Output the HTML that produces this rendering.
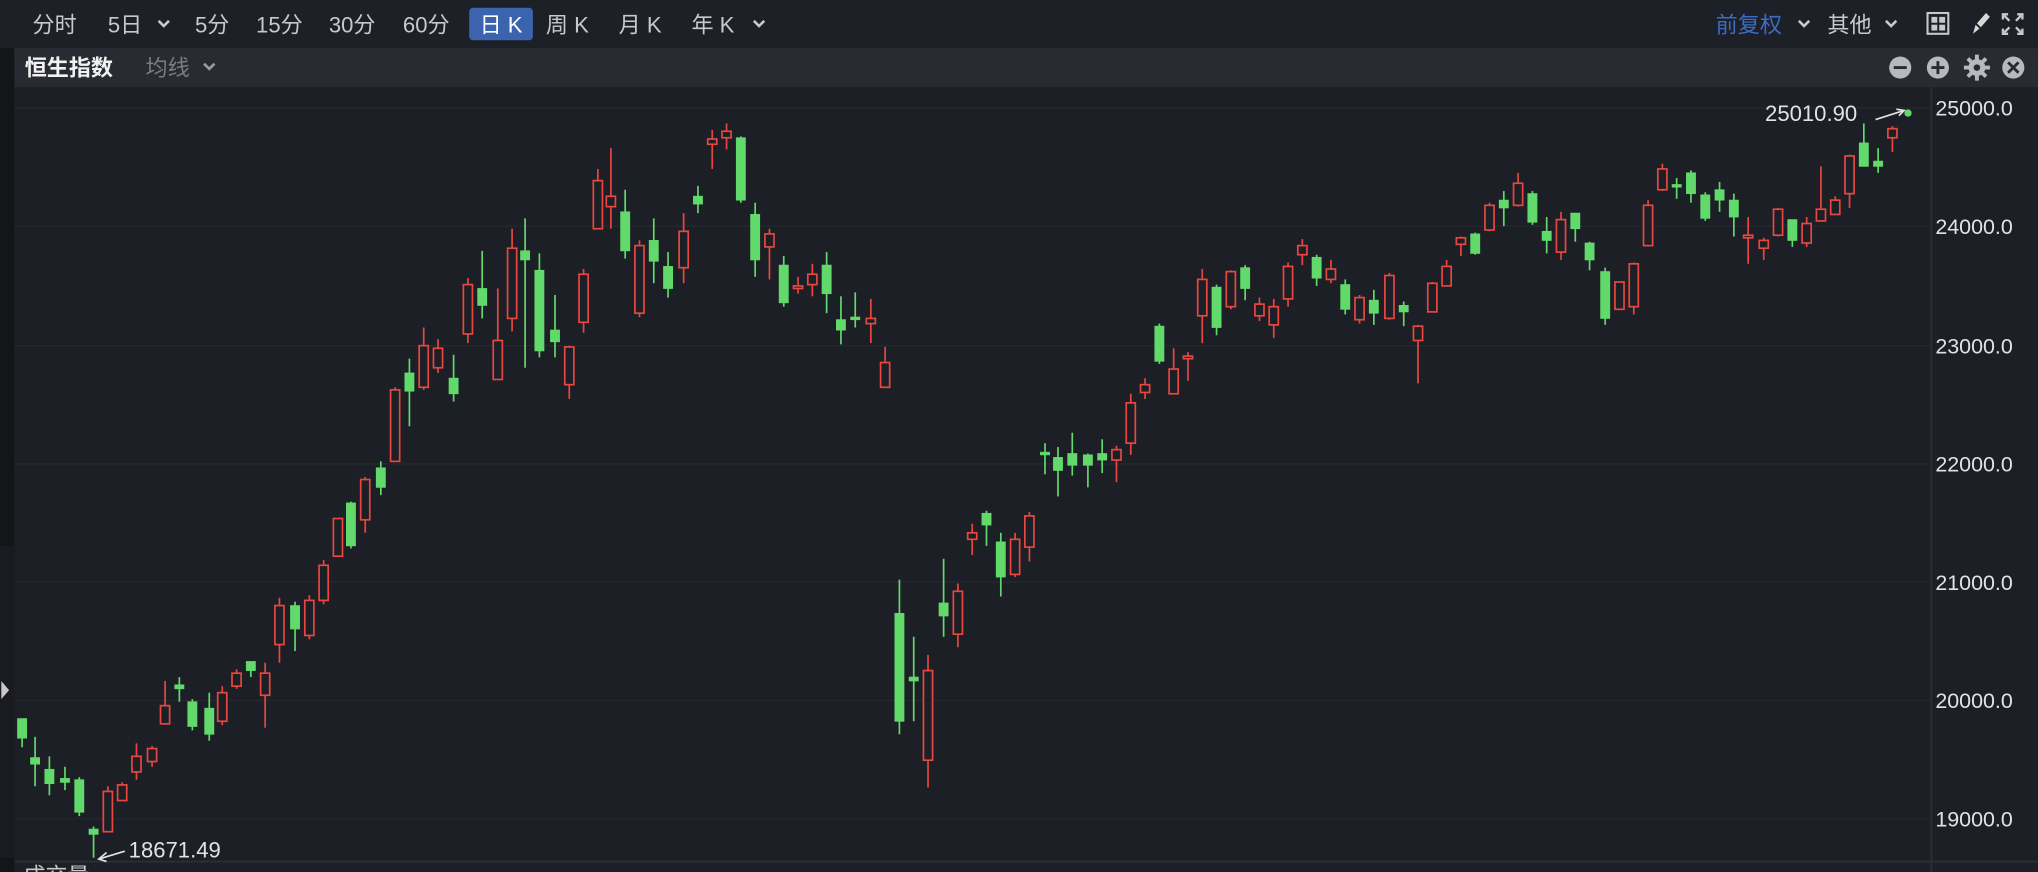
<!DOCTYPE html>
<html><head><meta charset="utf-8"><style>
html,body{margin:0;padding:0;background:#1d1f26;overflow:hidden}
svg{display:block}
text{font-family:"Liberation Sans","Noto Sans CJK SC",sans-serif}
.r line{stroke:#e8473f;stroke-width:1.3}
.r rect{fill:#1d1f26;stroke:#e8473f;stroke-width:1.3}
.g line{stroke:#62d96b;stroke-width:1.3}
.g rect{fill:#62d96b;stroke:#62d96b;stroke-width:0.6}
</style></head><body>
<svg width="2038" height="872" viewBox="0 0 1568 671" preserveAspectRatio="none" xmlns="http://www.w3.org/2000/svg">
<rect width="1568" height="671" fill="#1d1f26"/>
<rect width="1568" height="37" fill="#1e2027"/>
<rect x="11" y="37" width="1557" height="30" fill="#292b32"/>
<rect x="0" y="37" width="11" height="634" fill="#141519"/>
<rect x="0" y="420" width="11" height="240" fill="#1a1b20"/>
<polygon points="1,524 7,531 1,538" fill="#c8c8c8"/>
<!-- grid -->
<g stroke="#262830" stroke-width="1">
<line x1="11" y1="83" x2="1486" y2="83"/><line x1="11" y1="174" x2="1486" y2="174"/>
<line x1="11" y1="266" x2="1486" y2="266"/><line x1="11" y1="357" x2="1486" y2="357"/>
<line x1="11" y1="448" x2="1486" y2="448"/><line x1="11" y1="539" x2="1486" y2="539"/>
<line x1="11" y1="630" x2="1486" y2="630"/>
</g>
<line x1="1486" y1="67" x2="1486" y2="671" stroke="#2c2e36" stroke-width="1.5"/>
<line x1="11" y1="663" x2="1568" y2="663" stroke="#2c2e36" stroke-width="1.5"/>
<!-- axis labels -->
<g fill="#e2e2e2" font-size="16.5">
<text x="1489" y="89">25000.0</text><text x="1489" y="180">24000.0</text>
<text x="1489" y="272">23000.0</text><text x="1489" y="363">22000.0</text>
<text x="1489" y="454">21000.0</text><text x="1489" y="545">20000.0</text>
<text x="1489" y="636">19000.0</text>
</g>
<!-- top bar -->
<rect x="361" y="6" width="49" height="25" rx="3" fill="#3c64ae"/>
<g fill="#c9c9cc" font-size="17">
<text x="25" y="25">分时</text><text x="83" y="25">5日</text><text x="150" y="25">5分</text>
<text x="197" y="25">15分</text><text x="253" y="25">30分</text><text x="310" y="25">60分</text>
<text x="369" y="25" fill="#fff">日 K</text><text x="420" y="25">周 K</text><text x="476" y="25">月 K</text><text x="532" y="25">年 K</text>
<text x="1406" y="25">其他</text>
</g>
<text x="1320" y="25" fill="#3a6cc4" font-size="17">前复权</text>
<g fill="none" stroke="#c9c9cc" stroke-width="2"><path d="M122 16l4 4 4-4"/><path d="M580 16l4 4 4-4"/><path d="M1451 16l4 4 4-4"/><path d="M1384 16l4 4 4-4"/></g>
<!-- right icons -->
<rect x="1483" y="10" width="16" height="16" fill="none" stroke="#c9c9cc" stroke-width="1.6"/>
<g fill="#c9c9cc"><rect x="1486" y="13" width="4.5" height="4.5"/><rect x="1492" y="13" width="4.5" height="4.5"/><rect x="1486" y="19" width="4.5" height="4.5"/><rect x="1492" y="19" width="4.5" height="4.5"/></g>
<path d="M1528 10l3 3-7 8-3-3z M1520 19l3 3-5 4z" fill="#d8d8d8"/>
<g stroke="#c9c9cc" stroke-width="1.8" fill="none"><path d="M1541 15v-4h4M1556 15v-4h-4M1541 22v4h4M1556 22v4h-4"/><path d="M1542 12l4 4M1555 12l-4 4M1542 25l4-4M1555 25l-4-4"/></g>
<!-- second bar -->
<text x="19" y="58" fill="#f2f2f2" font-size="17" font-weight="bold">恒生指数</text>
<text x="112" y="58" fill="#7b7d83" font-size="17">均线</text>
<path d="M157 49l4 4 4-4" fill="none" stroke="#9a9ca0" stroke-width="2"/>
<g fill="#b8b9bc"><circle cx="1462" cy="52" r="8.5"/><circle cx="1491" cy="52" r="8.5"/><circle cx="1549" cy="52" r="8.5"/><circle cx="1521" cy="52" r="6.5"/></g>
<g stroke="#b8b9bc" stroke-width="3"><path d="M1521 42v20M1511 52h20M1514 45l14 14M1528 45l-14 14"/></g>
<circle cx="1521" cy="52" r="2.5" fill="#292b32"/>
<g stroke="#292b32" stroke-width="2.2"><path d="M1457 52h10M1486 52h10M1491 47v10M1545 48l8 8M1553 48l-8 8"/></g>
<!-- annotations -->
<text x="1358" y="93" fill="#e2e2e2" font-size="17">25010.90</text>
<path d="M1443 92l22-7M1459 84l6 1-4 4" stroke="#e2e2e2" stroke-width="1.3" fill="none"/>
<circle cx="1468" cy="87" r="2.8" fill="#62d96b"/>
<text x="99" y="660" fill="#e2e2e2" font-size="17">18671.49</text>
<path d="M96 655l-20 6M82 656l-6 5 6 2" stroke="#e2e2e2" stroke-width="1.3" fill="none"/>
<text x="18" y="680" fill="#c9c9cc" font-size="17">成交量</text>
<!-- candles -->
<g class="g"><line x1="17" y1="553" x2="17" y2="575"/><rect x="13.5" y="553" width="7" height="15"/></g>
<g class="g"><line x1="27" y1="567" x2="27" y2="605"/><rect x="23.5" y="583" width="7" height="5"/></g>
<g class="g"><line x1="38" y1="582" x2="38" y2="612"/><rect x="34.5" y="592" width="7" height="11"/></g>
<g class="g"><line x1="50" y1="590" x2="50" y2="608"/><rect x="46.5" y="599" width="7" height="3"/></g>
<g class="g"><line x1="61" y1="598" x2="61" y2="628"/><rect x="57.5" y="600" width="7" height="25"/></g>
<g class="g"><line x1="72" y1="636" x2="72" y2="660"/><rect x="68.5" y="638" width="7" height="4"/></g>
<g class="r"><line x1="83" y1="605" x2="83" y2="640"/><rect x="79.5" y="609" width="7" height="31"/></g>
<g class="r"><line x1="94" y1="602" x2="94" y2="616"/><rect x="90.5" y="604" width="7" height="12"/></g>
<g class="r"><line x1="105" y1="572" x2="105" y2="600"/><rect x="101.5" y="582" width="7" height="12"/></g>
<g class="r"><line x1="117" y1="574" x2="117" y2="590"/><rect x="113.5" y="576" width="7" height="10"/></g>
<g class="r"><line x1="127" y1="524" x2="127" y2="557"/><rect x="123.5" y="543" width="7" height="14"/></g>
<g class="g"><line x1="138" y1="521" x2="138" y2="540"/><rect x="134.5" y="527" width="7" height="3"/></g>
<g class="g"><line x1="148" y1="538" x2="148" y2="562"/><rect x="144.5" y="540" width="7" height="19"/></g>
<g class="g"><line x1="161" y1="533" x2="161" y2="570"/><rect x="157.5" y="545" width="7" height="20"/></g>
<g class="r"><line x1="171" y1="528" x2="171" y2="558"/><rect x="167.5" y="533" width="7" height="22"/></g>
<g class="r"><line x1="182" y1="515" x2="182" y2="530"/><rect x="178.5" y="518" width="7" height="10"/></g>
<g class="g"><line x1="193" y1="509" x2="193" y2="521"/><rect x="189.5" y="509" width="7" height="7"/></g>
<g class="r"><line x1="204" y1="510" x2="204" y2="560"/><rect x="200.5" y="518" width="7" height="17"/></g>
<g class="r"><line x1="215" y1="460" x2="215" y2="510"/><rect x="211.5" y="466" width="7" height="30"/></g>
<g class="g"><line x1="227" y1="463" x2="227" y2="501"/><rect x="223.5" y="466" width="7" height="18"/></g>
<g class="r"><line x1="238" y1="458" x2="238" y2="492"/><rect x="234.5" y="462" width="7" height="27"/></g>
<g class="r"><line x1="249" y1="431" x2="249" y2="465"/><rect x="245.5" y="435" width="7" height="27"/></g>
<g class="r"><line x1="260" y1="399" x2="260" y2="428"/><rect x="256.5" y="399" width="7" height="29"/></g>
<g class="g"><line x1="270" y1="386" x2="270" y2="422"/><rect x="266.5" y="387" width="7" height="33"/></g>
<g class="r"><line x1="281" y1="367" x2="281" y2="410"/><rect x="277.5" y="369" width="7" height="31"/></g>
<g class="g"><line x1="293" y1="355" x2="293" y2="381"/><rect x="289.5" y="360" width="7" height="15"/></g>
<g class="r"><line x1="304" y1="298" x2="304" y2="355"/><rect x="300.5" y="300" width="7" height="55"/></g>
<g class="g"><line x1="315" y1="276" x2="315" y2="328"/><rect x="311.5" y="287" width="7" height="14"/></g>
<g class="r"><line x1="326" y1="252" x2="326" y2="300"/><rect x="322.5" y="266" width="7" height="32"/></g>
<g class="r"><line x1="337" y1="261" x2="337" y2="287"/><rect x="333.5" y="268" width="7" height="15"/></g>
<g class="g"><line x1="349" y1="273" x2="349" y2="309"/><rect x="345.5" y="291" width="7" height="12"/></g>
<g class="r"><line x1="360" y1="214" x2="360" y2="264"/><rect x="356.5" y="219" width="7" height="38"/></g>
<g class="g"><line x1="371" y1="193" x2="371" y2="245"/><rect x="367.5" y="222" width="7" height="13"/></g>
<g class="r"><line x1="383" y1="222" x2="383" y2="292"/><rect x="379.5" y="262" width="7" height="30"/></g>
<g class="r"><line x1="394" y1="176" x2="394" y2="255"/><rect x="390.5" y="191" width="7" height="54"/></g>
<g class="g"><line x1="404" y1="168" x2="404" y2="283"/><rect x="400.5" y="193" width="7" height="7"/></g>
<g class="g"><line x1="415" y1="195" x2="415" y2="275"/><rect x="411.5" y="208" width="7" height="62"/></g>
<g class="g"><line x1="427" y1="227" x2="427" y2="275"/><rect x="423.5" y="254" width="7" height="9"/></g>
<g class="r"><line x1="438" y1="266" x2="438" y2="307"/><rect x="434.5" y="267" width="7" height="29"/></g>
<g class="r"><line x1="449" y1="207" x2="449" y2="256"/><rect x="445.5" y="211" width="7" height="37"/></g>
<g class="r"><line x1="460" y1="130" x2="460" y2="176"/><rect x="456.5" y="139" width="7" height="37"/></g>
<g class="r"><line x1="470" y1="114" x2="470" y2="176"/><rect x="466.5" y="151" width="7" height="8"/></g>
<g class="g"><line x1="481" y1="146" x2="481" y2="199"/><rect x="477.5" y="163" width="7" height="30"/></g>
<g class="r"><line x1="492" y1="185" x2="492" y2="244"/><rect x="488.5" y="189" width="7" height="52"/></g>
<g class="g"><line x1="503" y1="168" x2="503" y2="218"/><rect x="499.5" y="185" width="7" height="16"/></g>
<g class="g"><line x1="514" y1="194" x2="514" y2="229"/><rect x="510.5" y="205" width="7" height="17"/></g>
<g class="r"><line x1="526" y1="164" x2="526" y2="218"/><rect x="522.5" y="178" width="7" height="28"/></g>
<g class="g"><line x1="537" y1="143" x2="537" y2="164"/><rect x="533.5" y="151" width="7" height="6"/></g>
<g class="r"><line x1="548" y1="100" x2="548" y2="130"/><rect x="544.5" y="107" width="7" height="4"/></g>
<g class="r"><line x1="559" y1="95" x2="559" y2="115"/><rect x="555.5" y="101" width="7" height="5"/></g>
<g class="g"><line x1="570" y1="105" x2="570" y2="156"/><rect x="566.5" y="106" width="7" height="48"/></g>
<g class="g"><line x1="581" y1="156" x2="581" y2="213"/><rect x="577.5" y="165" width="7" height="35"/></g>
<g class="r"><line x1="592" y1="176" x2="592" y2="215"/><rect x="588.5" y="180" width="7" height="10"/></g>
<g class="g"><line x1="603" y1="197" x2="603" y2="236"/><rect x="599.5" y="204" width="7" height="29"/></g>
<g class="r"><line x1="614" y1="213" x2="614" y2="226"/><rect x="610.5" y="220" width="7" height="2"/></g>
<g class="r"><line x1="625" y1="203" x2="625" y2="228"/><rect x="621.5" y="211" width="7" height="8"/></g>
<g class="g"><line x1="636" y1="194" x2="636" y2="241"/><rect x="632.5" y="204" width="7" height="22"/></g>
<g class="g"><line x1="647" y1="228" x2="647" y2="265"/><rect x="643.5" y="246" width="7" height="8"/></g>
<g class="g"><line x1="658" y1="225" x2="658" y2="252"/><rect x="654.5" y="244" width="7" height="2"/></g>
<g class="r"><line x1="670" y1="230" x2="670" y2="264"/><rect x="666.5" y="245" width="7" height="4"/></g>
<g class="r"><line x1="681" y1="267" x2="681" y2="298"/><rect x="677.5" y="279" width="7" height="19"/></g>
<g class="g"><line x1="692" y1="446" x2="692" y2="565"/><rect x="688.5" y="472" width="7" height="83"/></g>
<g class="g"><line x1="703" y1="490" x2="703" y2="555"/><rect x="699.5" y="521" width="7" height="3"/></g>
<g class="r"><line x1="714" y1="504" x2="714" y2="606"/><rect x="710.5" y="516" width="7" height="69"/></g>
<g class="g"><line x1="726" y1="430" x2="726" y2="490"/><rect x="722.5" y="464" width="7" height="10"/></g>
<g class="r"><line x1="737" y1="449" x2="737" y2="498"/><rect x="733.5" y="455" width="7" height="33"/></g>
<g class="r"><line x1="748" y1="403" x2="748" y2="427"/><rect x="744.5" y="410" width="7" height="5"/></g>
<g class="g"><line x1="759" y1="393" x2="759" y2="420"/><rect x="755.5" y="395" width="7" height="9"/></g>
<g class="g"><line x1="770" y1="410" x2="770" y2="459"/><rect x="766.5" y="417" width="7" height="27"/></g>
<g class="r"><line x1="781" y1="410" x2="781" y2="444"/><rect x="777.5" y="415" width="7" height="27"/></g>
<g class="r"><line x1="792" y1="394" x2="792" y2="432"/><rect x="788.5" y="397" width="7" height="24"/></g>
<g class="g"><line x1="804" y1="341" x2="804" y2="365"/><rect x="800.5" y="348" width="7" height="2"/></g>
<g class="g"><line x1="814" y1="344" x2="814" y2="382"/><rect x="810.5" y="352" width="7" height="10"/></g>
<g class="g"><line x1="825" y1="333" x2="825" y2="366"/><rect x="821.5" y="349" width="7" height="9"/></g>
<g class="g"><line x1="837" y1="349" x2="837" y2="375"/><rect x="833.5" y="350" width="7" height="8"/></g>
<g class="g"><line x1="848" y1="338" x2="848" y2="364"/><rect x="844.5" y="349" width="7" height="5"/></g>
<g class="r"><line x1="859" y1="343" x2="859" y2="371"/><rect x="855.5" y="346" width="7" height="8"/></g>
<g class="r"><line x1="870" y1="303" x2="870" y2="350"/><rect x="866.5" y="310" width="7" height="31"/></g>
<g class="r"><line x1="881" y1="291" x2="881" y2="307"/><rect x="877.5" y="296" width="7" height="6"/></g>
<g class="g"><line x1="892" y1="249" x2="892" y2="280"/><rect x="888.5" y="251" width="7" height="27"/></g>
<g class="r"><line x1="903" y1="268" x2="903" y2="303"/><rect x="899.5" y="284" width="7" height="19"/></g>
<g class="r"><line x1="914" y1="271" x2="914" y2="293"/><rect x="910.5" y="274" width="7" height="2"/></g>
<g class="r"><line x1="925" y1="207" x2="925" y2="264"/><rect x="921.5" y="215" width="7" height="28"/></g>
<g class="g"><line x1="936" y1="219" x2="936" y2="258"/><rect x="932.5" y="221" width="7" height="31"/></g>
<g class="r"><line x1="947" y1="208" x2="947" y2="238"/><rect x="943.5" y="209" width="7" height="27"/></g>
<g class="g"><line x1="958" y1="204" x2="958" y2="231"/><rect x="954.5" y="206" width="7" height="16"/></g>
<g class="r"><line x1="969" y1="229" x2="969" y2="247"/><rect x="965.5" y="234" width="7" height="9"/></g>
<g class="r"><line x1="980" y1="230" x2="980" y2="260"/><rect x="976.5" y="236" width="7" height="14"/></g>
<g class="r"><line x1="991" y1="202" x2="991" y2="236"/><rect x="987.5" y="205" width="7" height="25"/></g>
<g class="r"><line x1="1002" y1="184" x2="1002" y2="204"/><rect x="998.5" y="189" width="7" height="7"/></g>
<g class="g"><line x1="1013" y1="196" x2="1013" y2="220"/><rect x="1009.5" y="198" width="7" height="16"/></g>
<g class="r"><line x1="1024" y1="200" x2="1024" y2="218"/><rect x="1020.5" y="207" width="7" height="8"/></g>
<g class="g"><line x1="1035" y1="215" x2="1035" y2="242"/><rect x="1031.5" y="219" width="7" height="19"/></g>
<g class="r"><line x1="1046" y1="227" x2="1046" y2="249"/><rect x="1042.5" y="229" width="7" height="17"/></g>
<g class="g"><line x1="1057" y1="223" x2="1057" y2="250"/><rect x="1053.5" y="231" width="7" height="10"/></g>
<g class="r"><line x1="1069" y1="210" x2="1069" y2="246"/><rect x="1065.5" y="212" width="7" height="33"/></g>
<g class="g"><line x1="1080" y1="232" x2="1080" y2="251"/><rect x="1076.5" y="235" width="7" height="5"/></g>
<g class="r"><line x1="1091" y1="250" x2="1091" y2="295"/><rect x="1087.5" y="251" width="7" height="11"/></g>
<g class="r"><line x1="1102" y1="217" x2="1102" y2="240"/><rect x="1098.5" y="218" width="7" height="22"/></g>
<g class="r"><line x1="1113" y1="200" x2="1113" y2="220"/><rect x="1109.5" y="205" width="7" height="15"/></g>
<g class="r"><line x1="1124" y1="182" x2="1124" y2="197"/><rect x="1120.5" y="183" width="7" height="5"/></g>
<g class="g"><line x1="1135" y1="179" x2="1135" y2="196"/><rect x="1131.5" y="180" width="7" height="15"/></g>
<g class="r"><line x1="1146" y1="156" x2="1146" y2="178"/><rect x="1142.5" y="158" width="7" height="19"/></g>
<g class="g"><line x1="1157" y1="147" x2="1157" y2="174"/><rect x="1153.5" y="154" width="7" height="6"/></g>
<g class="r"><line x1="1168" y1="133" x2="1168" y2="159"/><rect x="1164.5" y="141" width="7" height="17"/></g>
<g class="g"><line x1="1179" y1="147" x2="1179" y2="173"/><rect x="1175.5" y="149" width="7" height="22"/></g>
<g class="g"><line x1="1190" y1="167" x2="1190" y2="195"/><rect x="1186.5" y="178" width="7" height="7"/></g>
<g class="r"><line x1="1201" y1="163" x2="1201" y2="200"/><rect x="1197.5" y="169" width="7" height="25"/></g>
<g class="g"><line x1="1212" y1="164" x2="1212" y2="186"/><rect x="1208.5" y="164" width="7" height="12"/></g>
<g class="g"><line x1="1223" y1="186" x2="1223" y2="208"/><rect x="1219.5" y="187" width="7" height="13"/></g>
<g class="g"><line x1="1235" y1="206" x2="1235" y2="250"/><rect x="1231.5" y="209" width="7" height="36"/></g>
<g class="r"><line x1="1246" y1="217" x2="1246" y2="238"/><rect x="1242.5" y="217" width="7" height="21"/></g>
<g class="r"><line x1="1257" y1="202" x2="1257" y2="242"/><rect x="1253.5" y="203" width="7" height="33"/></g>
<g class="r"><line x1="1268" y1="154" x2="1268" y2="189"/><rect x="1264.5" y="158" width="7" height="31"/></g>
<g class="r"><line x1="1279" y1="126" x2="1279" y2="147"/><rect x="1275.5" y="130" width="7" height="16"/></g>
<g class="g"><line x1="1290" y1="137" x2="1290" y2="153"/><rect x="1286.5" y="142" width="7" height="2"/></g>
<g class="g"><line x1="1301" y1="131" x2="1301" y2="156"/><rect x="1297.5" y="133" width="7" height="16"/></g>
<g class="g"><line x1="1312" y1="148" x2="1312" y2="170"/><rect x="1308.5" y="150" width="7" height="18"/></g>
<g class="g"><line x1="1323" y1="140" x2="1323" y2="163"/><rect x="1319.5" y="146" width="7" height="8"/></g>
<g class="g"><line x1="1334" y1="149" x2="1334" y2="182"/><rect x="1330.5" y="154" width="7" height="13"/></g>
<g class="r"><line x1="1345" y1="167" x2="1345" y2="203"/><rect x="1341.5" y="181" width="7" height="2"/></g>
<g class="r"><line x1="1357" y1="183" x2="1357" y2="200"/><rect x="1353.5" y="185" width="7" height="6"/></g>
<g class="r"><line x1="1368" y1="160" x2="1368" y2="182"/><rect x="1364.5" y="161" width="7" height="20"/></g>
<g class="g"><line x1="1379" y1="169" x2="1379" y2="190"/><rect x="1375.5" y="169" width="7" height="16"/></g>
<g class="r"><line x1="1390" y1="167" x2="1390" y2="190"/><rect x="1386.5" y="172" width="7" height="15"/></g>
<g class="r"><line x1="1401" y1="128" x2="1401" y2="170"/><rect x="1397.5" y="161" width="7" height="9"/></g>
<g class="r"><line x1="1412" y1="151" x2="1412" y2="165"/><rect x="1408.5" y="154" width="7" height="11"/></g>
<g class="r"><line x1="1423" y1="119" x2="1423" y2="160"/><rect x="1419.5" y="120" width="7" height="29"/></g>
<g class="g"><line x1="1434" y1="95" x2="1434" y2="128"/><rect x="1430.5" y="110" width="7" height="18"/></g>
<g class="g"><line x1="1445" y1="114" x2="1445" y2="133"/><rect x="1441.5" y="124" width="7" height="4"/></g>
<g class="r"><line x1="1456" y1="97" x2="1456" y2="117"/><rect x="1452.5" y="99" width="7" height="7"/></g>
</svg>
</body></html>
